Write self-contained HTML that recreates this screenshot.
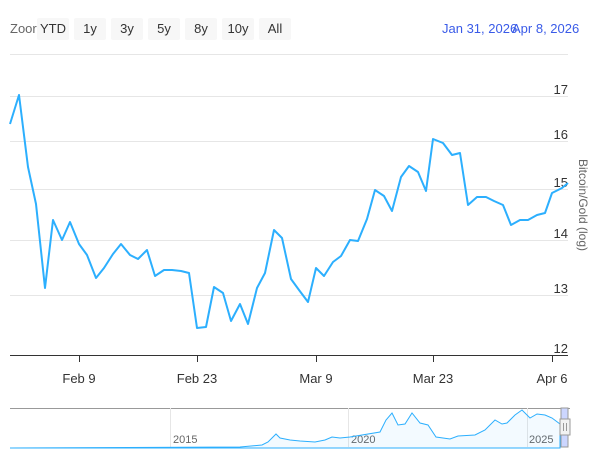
<!DOCTYPE html><html><head><style>
body{margin:0;background:#fff;font-family:"Liberation Sans",sans-serif;}
.b{position:absolute;top:18px;height:22px;background:#f7f7f7;border-radius:2px;font-size:13px;color:#333;text-align:center;line-height:22px}
</style></head><body>
<div style="position:relative;width:600px;height:450px;overflow:hidden">
<div style="position:absolute;left:10px;top:18px;font-size:13px;color:#666;line-height:22px">Zoor</div>
<div class="b" style="left:37px;width:32px">YTD</div>
<div class="b" style="left:74px;width:32px">1y</div>
<div class="b" style="left:111px;width:32px">3y</div>
<div class="b" style="left:148px;width:32px">5y</div>
<div class="b" style="left:185px;width:32px">8y</div>
<div class="b" style="left:222px;width:32px">10y</div>
<div class="b" style="left:259px;width:32px">All</div>
<div style="position:absolute;left:442px;top:18px;font-size:13px;color:#3a5be8;line-height:22px">Jan 31, 2026</div>
<div style="position:absolute;left:512px;top:18px;font-size:13px;color:#3a5be8;line-height:22px">Apr 8, 2026</div>
<svg width="600" height="450" style="position:absolute;left:0;top:0" font-family="Liberation Sans" font-size="13">
<g stroke="#e6e6e6" stroke-width="1">
<line x1="10" x2="568" y1="54.5" y2="54.5"/><line x1="10" x2="568" y1="96.5" y2="96.5"/>
<line x1="10" x2="568" y1="141.5" y2="141.5"/><line x1="10" x2="568" y1="189.5" y2="189.5"/>
<line x1="10" x2="568" y1="240.5" y2="240.5"/><line x1="10" x2="568" y1="295.5" y2="295.5"/>
</g>
<line x1="10" x2="568" y1="355.5" y2="355.5" stroke="#333"/>
<g stroke="#333"><line x1="79.5" x2="79.5" y1="355" y2="362"/><line x1="197.5" x2="197.5" y1="355" y2="362"/><line x1="316.5" x2="316.5" y1="355" y2="362"/><line x1="433.5" x2="433.5" y1="355" y2="362"/><line x1="552.5" x2="552.5" y1="355" y2="362"/></g>
<g fill="#333" text-anchor="end"><text x="568" y="94">17</text><text x="568" y="139">16</text><text x="568" y="187">15</text><text x="568" y="238">14</text><text x="568" y="293">13</text><text x="568" y="353">12</text></g>
<g fill="#333" text-anchor="middle"><text x="79" y="383">Feb 9</text><text x="197" y="383">Feb 23</text><text x="316" y="383">Mar 9</text><text x="433" y="383">Mar 23</text><text x="552" y="383">Apr 6</text></g>
<text transform="translate(579,205) rotate(90)" text-anchor="middle" fill="#666" font-size="12">Bitcoin/Gold (log)</text>
<polyline fill="none" stroke="#2caffe" stroke-width="2" stroke-linejoin="round" points="10,124 19,95 28,167 36,204 45,288 53,220 62,240 70,222 79,244 87,255 96,278 104,268 113,254 121,244 130,255 138,259 147,250 155,276 164,270 172,270 181,271 189,273 197,328 206,327 214,287 223,293 231,321 240,304 248,324 257,288 265,273 274,230 282,238 291,279 299,290 308,302 316,268 324,276 333,262 341,256 350,240 358,241 367,219 375,190 384,196 392,211 401,177 409,166 418,172 426,191 433,139 443,143 452,155 460,153 468,205 477,197 486,197 494,201 503,205 511,225 520,220 528,220 537,215 545,213 552,193 562,188 568,183"/>
<line x1="10" x2="570" y1="408.5" y2="408.5" stroke="#999"/>
<g stroke="#e6e6e6"><line x1="170.5" x2="170.5" y1="408" y2="447"/><line x1="348.5" x2="348.5" y1="408" y2="447"/><line x1="527.5" x2="527.5" y1="408" y2="447"/></g>
<g fill="#666" font-size="11"><text x="173" y="443">2015</text><text x="351" y="443">2020</text><text x="529" y="443">2025</text></g>
<path d="M10,448 L240,447 L262,445 L268,442 L272,438 L276,434 L280,438 L290,440 L300,441 L315,442 L325,440 L332,437 L340,438 L350,437 L380,432 L386,420 L392,413 L398,425 L405,424 L412,413 L420,423 L428,425 L436,437 L450,439 L458,436 L475,435 L485,430 L495,420 L502,424 L507,423 L515,415 L522,410 L530,418 L537,414 L545,415 L552,418 L560,424 L560,448 Z" fill="#2caffe" fill-opacity="0.06" stroke="#2caffe" stroke-width="1"/>
<rect x="561" y="408" width="7" height="39" fill="#ccd6ff" stroke="#999"/>
<rect x="560" y="419" width="10" height="16" fill="#f2f2f2" stroke="#999"/>
<g stroke="#999"><line x1="563.5" x2="563.5" y1="423" y2="431"/><line x1="566.5" x2="566.5" y1="423" y2="431"/></g>
</svg>
</div></body></html>
